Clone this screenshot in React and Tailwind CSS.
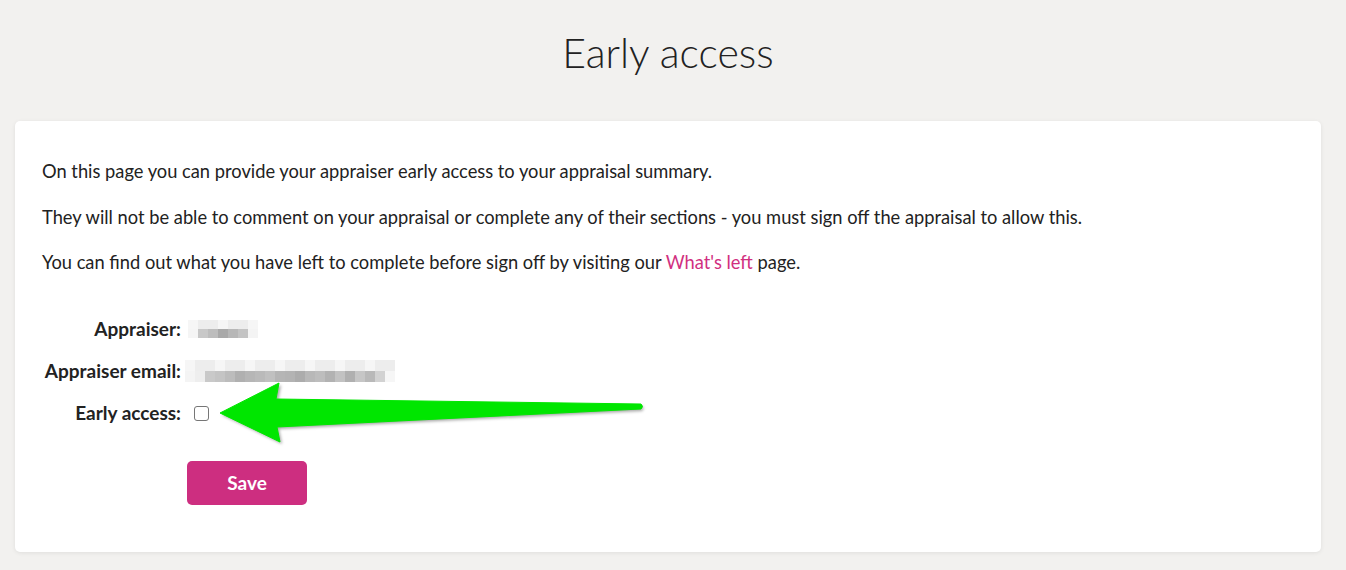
import React from "react";

const emailBlocks = [
  "#f4f4f4","#eeeeee","#c9c9c9","#c4c4c4","#bcbcbc","#b0b0b0","#b6b6b6","#bababa","#c0c0c0","#b5b5b5","#b3b3b3","#acacac","#b8b8b8","#bdbdbd","#b2b2b2","#c2c2c2","#b0b0b0","#c6c6c6","#b9b9b9","#d2d2d2","#f6f6f6",
];
const nameBlocks = ["#f5f5f5","#c8c8c8","#bdbdbd","#a9a9a9","#b7b7b7","#c3c3c3","#f4f4f4"];

function Pixelated({ blocks, w, h }) {
  return (
    <div className="flex flex-col">
      <div className="flex">
        {blocks.map((c, i) => (
          <div key={"a" + i} style={{ background: i % 3 === 0 ? "#f6f6f6" : "#ededed", width: w, height: h / 2 }} />
        ))}
      </div>
      <div className="flex">
        {blocks.map((c, i) => (
          <div key={"b" + i} style={{ background: c, width: w, height: h / 2 }} />
        ))}
      </div>
    </div>
  );
}

function Row({ label, children }) {
  return (
    <div className="flex items-center h-[42px]">
      <div className="w-[139px] text-right font-bold whitespace-nowrap text-[19px] text-[#222]">{label}</div>
      <div className="ml-[7px] flex items-center">{children}</div>
    </div>
  );
}

export default function App() {
  return (
    <div
      className="relative min-h-screen w-full bg-[#f2f1ef] overflow-hidden"
      style={{ fontFamily: "Lato, 'Open Sans', sans-serif" }}
    >
      <h1 className="pt-[29px] pr-[10px] text-center text-[41px] leading-[48px] font-light text-[#222]">
        Early access
      </h1>
      <div className="mx-[15px] mt-[44px] w-[1306px] bg-white rounded-[5px] shadow-[0_1px_4px_rgba(0,0,0,0.08)] px-[27px] pt-[39px] pb-[47px] text-[18.3px] text-[#222]">
        <p className="leading-[23px] mb-[22.5px]">
          On this page you can provide your appraiser early access to your appraisal summary.
        </p>
        <p className="leading-[23px] mb-[22.5px]">
          They will not be able to comment on your appraisal or complete any of their sections - you must sign off the appraisal to allow this.
        </p>
        <p className="leading-[23px]">
          You can find out what you have left to complete before sign off by visiting our{" "}
          <a className="text-[#d1307f]" href="#">What's left</a> page.
        </p>
        <div className="mt-[34px]">
          <Row label="Appraiser:">
            <div className="blur-[0.6px]">
              <Pixelated blocks={nameBlocks} w={10} h={18} />
            </div>
          </Row>
          <Row label="Appraiser email:">
            <div className="-ml-[3px] blur-[0.6px]">
              <Pixelated blocks={emailBlocks} w={10} h={22} />
            </div>
          </Row>
          <Row label="Early access:">
            <input
              type="checkbox"
              className="appearance-none ml-[6px] w-[15px] h-[15px] border border-[#767676] rounded-[3px] bg-white"
            />
          </Row>
        </div>
        <button className="mt-[27px] ml-[145px] w-[120px] h-[44px] rounded-[5px] bg-[#cd2e80] text-white font-bold text-[19px]">
          Save
        </button>
      </div>

      <svg
        className="pointer-events-none absolute left-0 top-0"
        width="1346"
        height="570"
        viewBox="0 0 1346 570"
      >
        <defs>
          <filter id="sh" x="-10%" y="-50%" width="120%" height="200%">
            <feGaussianBlur stdDeviation="1.5" />
          </filter>
        </defs>
        <path
          d="M222 415 L281 385 L278 401 L642 406 Q645 408.5 642 411 L279 429 L282 444 Z"
          fill="rgba(0,0,0,0.35)"
          filter="url(#sh)"
        />
        <path
          d="M220 413 L279 383 L276 399 L641 404 Q644 406.5 641 409 L277 427 L280 442 Z"
          fill="#00e600"
          stroke="#00e600"
          strokeWidth="1"
          strokeLinejoin="round"
        />
      </svg>
    </div>
  );
}
